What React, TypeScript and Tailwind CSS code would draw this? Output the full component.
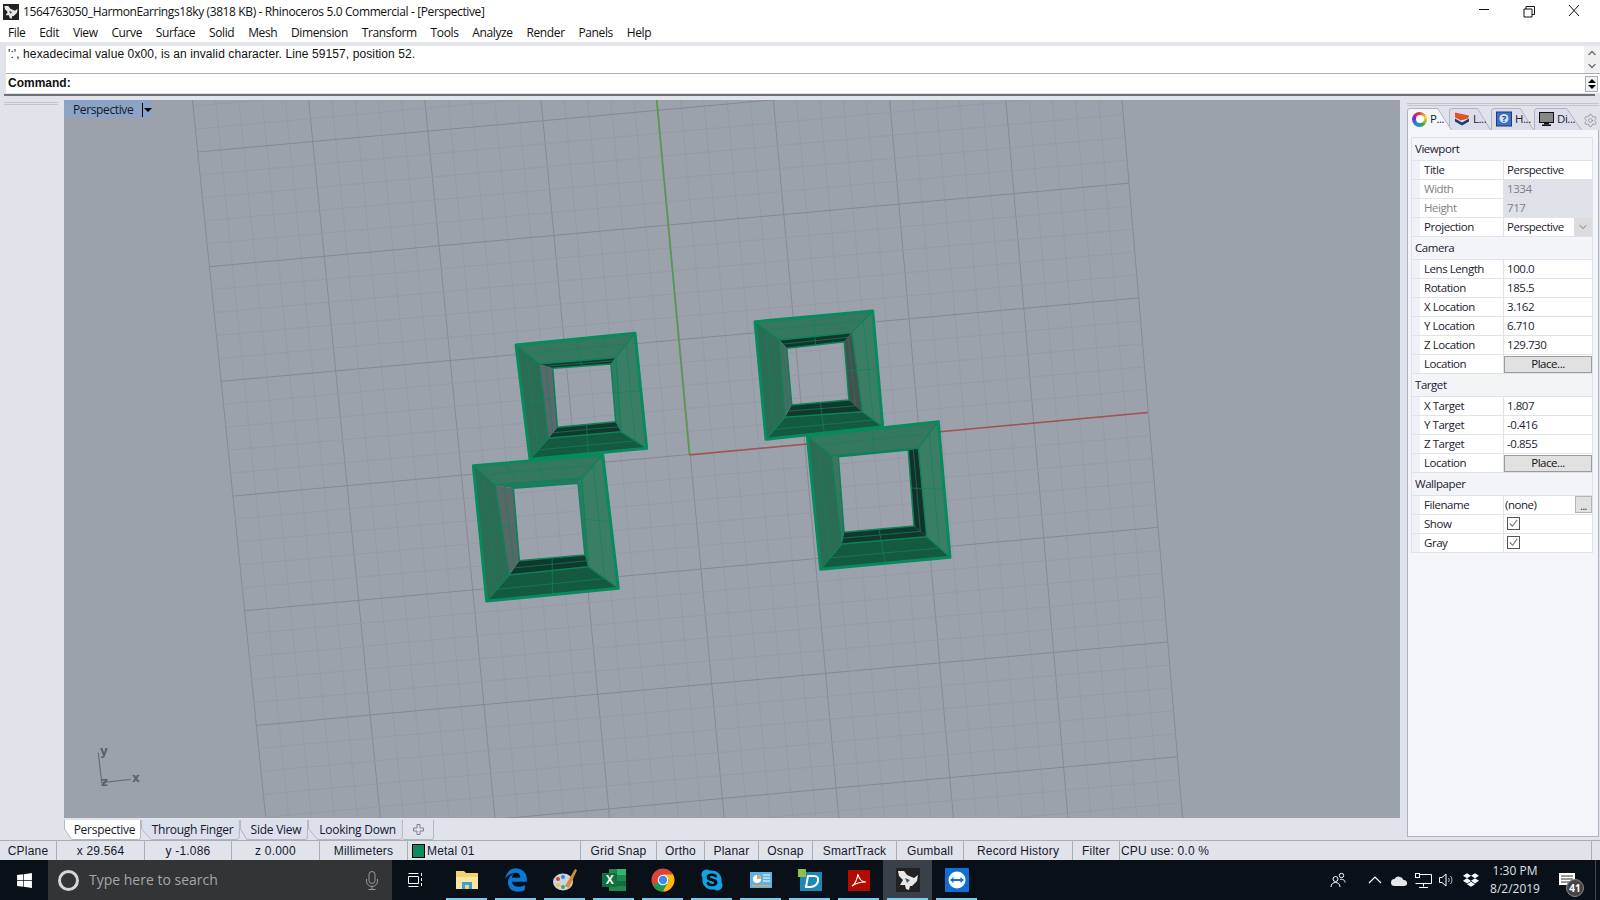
import { ChevronDown, ChevronUp, Settings } from "lucide-react";
import { FaDropbox, FaEdgeLegacy, FaSkype, FaWindows } from "react-icons/fa";

type P = [number, number];

const menu = ["File", "Edit", "View", "Curve", "Surface", "Solid", "Mesh", "Dimension", "Transform", "Tools", "Analyze", "Render", "Panels", "Help"];

// grid geometry, in page coordinates
const verticals = Array.from({ length: 41 }, (_, n) => {
  const i = n / 5;
  return { n, x1: 192.4 + 116.2 * i, x2: 266 + 114.6 * i };
});
const horizontals = Array.from({ length: 41 }, (_, n) => {
  const j = n / 5 - 1;
  return { n, x1: 197.8 + 11.6 * j, y1: 152 + 114.7 * j, x2: 1119 + 9.8 * j, y2: 68.5 + 114.7 * j };
});

const mix = (a: P, b: P, t: number): P => [a[0] + (b[0] - a[0]) * t, a[1] + (b[1] - a[1]) * t];
const pts = (list: P[]) => list.map((p) => p.join(",")).join(" ");

const earrings: { outer: P[]; ring: P[]; hole: P[]; walls: string[]; ribs?: boolean }[] = [
  {
    outer: [[516, 345], [635, 333.3], [646.7, 448.3], [530, 459.3]],
    ring: [[539.3, 364], [615.7, 357.7], [621, 431.7], [548.3, 438.3]],
    hole: [[552.7, 368.3], [611, 364], [615.7, 421.7], [557.3, 427.3]],
    walls: ["#14352c", "#3f7c68", "#10392d", "#59686a"],
    ribs: true,
  },
  {
    outer: [[755, 321.7], [872.7, 311], [882.7, 426.7], [766, 439.3]],
    ring: [[779.3, 340], [851.7, 332.7], [862.3, 411.7], [785, 417.3]],
    hole: [[786.7, 348.3], [844.3, 341.7], [849, 400], [791.7, 405]],
    walls: ["#10352b", "#454f4e", "#10392d", "#4d6a62"],
  },
  {
    outer: [[473.3, 465.7], [602.7, 455], [618.3, 588.3], [486.7, 601]],
    ring: [[495, 485], [581.7, 478.3], [588.3, 566.7], [509.3, 575]],
    hole: [[513.3, 488.3], [578.3, 483.3], [585, 555], [519.3, 560.7]],
    walls: ["#2c7560", "#3f7c68", "#10392d", "#566967"],
    ribs: true,
  },
  {
    outer: [[807.3, 436], [938.3, 421.7], [950, 557.3], [820.7, 569.3]],
    ring: [[831.7, 456], [918.3, 448.3], [926.7, 536.7], [841.7, 544]],
    hole: [[838.3, 456.7], [908.3, 450], [914, 526], [844, 532.3]],
    walls: ["#2c7560", "#14302a", "#10392d", "#4d7060"],
  },
];

const faceFill = ["#35785f", "#3b7e66", "#135a40", "#2b6c54"];

const Earring = ({ outer, ring, hole, walls, ribs }: (typeof earrings)[number]) => {
  const sides = [0, 1, 2, 3];
  const next = (i: number) => (i + 1) % 4;
  const band = outer.map((p, i) => mix(p, ring[i], 0.45));
  const wallMid = ring.map((p, i) => mix(p, hole[i], 0.5));
  return (
    <g strokeLinejoin="round">
      {sides.map((i) => (
        <polygon key={i} points={pts([outer[i], outer[next(i)], ring[next(i)], ring[i]])} fill={faceFill[i]} />
      ))}
      {sides.map((i) => (
        <polygon key={i} points={pts([ring[i], ring[next(i)], hole[next(i)], hole[i]])} fill={walls[i]} />
      ))}
      <polygon points={pts(band)} fill="none" stroke="#167f5b" strokeWidth="0.7" />
      <polygon points={pts(wallMid)} fill="none" stroke="#167f5b" strokeWidth="0.7" />
      {sides.map((i) => (
        <line
          key={i}
          x1={mix(outer[i], outer[next(i)], 0.5)[0]}
          y1={mix(outer[i], outer[next(i)], 0.5)[1]}
          x2={mix(hole[i], hole[next(i)], 0.5)[0]}
          y2={mix(hole[i], hole[next(i)], 0.5)[1]}
          stroke="#167f5b"
          strokeWidth="0.7"
        />
      ))}
      {ribs &&
        [0.25, 0.75].map((t) => (
          <line
            key={t}
            x1={mix(outer[0], outer[1], t)[0]}
            y1={mix(outer[0], outer[1], t)[1]}
            x2={mix(ring[0], ring[1], t)[0]}
            y2={mix(ring[0], ring[1], t)[1]}
            stroke="#167f5b"
            strokeWidth="0.7"
          />
        ))}
      {sides.map((i) => (
        <line key={i} x1={outer[i][0]} y1={outer[i][1]} x2={ring[i][0]} y2={ring[i][1]} stroke="#0a8358" strokeWidth="1.2" />
      ))}
      <polygon points={pts(ring)} fill="none" stroke="#0a8358" strokeWidth="1.4" />
      <polygon points={pts(hole)} fill="none" stroke="#0a8358" strokeWidth="1.6" />
      <polygon points={pts(outer)} fill="none" stroke="#078a5c" strokeWidth="3" />
    </g>
  );
};

const Scene = () => (
  <svg className="block h-full w-full" viewBox="64 100 1336 718">
    {verticals.map((l) => (
      <line key={l.n} x1={l.x1} y1="100" x2={l.x2} y2="820" stroke={l.n % 5 === 0 ? "#858a95" : "#959ba6"} strokeWidth="1" />
    ))}
    {horizontals.map((l) => (
      <line key={l.n} x1={l.x1} y1={l.y1} x2={l.x2} y2={l.y2} stroke={l.n % 5 === 0 ? "#858a95" : "#959ba6"} strokeWidth="1" />
    ))}
    <line x1="656.6" y1="100" x2="689.4" y2="455" stroke="#4f9c47" strokeWidth="1.5" />
    <line x1="689.4" y1="455" x2="1147.7" y2="412.6" stroke="#a8504f" strokeWidth="1.5" />
    {earrings.map((e, i) => (
      <Earring key={i} {...e} />
    ))}
    <polyline points="98.3,752.7 101.7,782.7 130.7,779.3" fill="none" stroke="#6a6e75" strokeWidth="1.2" />
    <g fill="#5b5f66" fontSize="12" fontWeight="700" fontFamily="DejaVu Sans, sans-serif">
      <text x="100" y="755">y</text>
      <text x="101" y="786">z</text>
      <text x="132" y="782">x</text>
    </g>
  </svg>
);

type Row =
  | { head: string }
  | { label: string; value?: string; off?: boolean; kind?: "select" | "button" | "file" | "check" };

const rows: Row[] = [
  { head: "Viewport" },
  { label: "Title", value: "Perspective" },
  { label: "Width", value: "1334", off: true },
  { label: "Height", value: "717", off: true },
  { label: "Projection", value: "Perspective", kind: "select" },
  { head: "Camera" },
  { label: "Lens Length", value: "100.0" },
  { label: "Rotation", value: "185.5" },
  { label: "X Location", value: "3.162" },
  { label: "Y Location", value: "6.710" },
  { label: "Z Location", value: "129.730" },
  { label: "Location", value: "Place...", kind: "button" },
  { head: "Target" },
  { label: "X Target", value: "1.807" },
  { label: "Y Target", value: "-0.416" },
  { label: "Z Target", value: "-0.855" },
  { label: "Location", value: "Place...", kind: "button" },
  { head: "Wallpaper" },
  { label: "Filename", value: "(none)", kind: "file" },
  { label: "Show", kind: "check" },
  { label: "Gray", kind: "check" },
];

const Check = () => (
  <div className="mb-[1px] ml-[3px] flex h-[13px] w-[13px] items-center justify-center border border-[#555]">
    <svg width="11" height="11" viewBox="0 0 12 12">
      <path d="M2 6l3 3 5-7" fill="none" stroke="#777" strokeWidth="1.2" />
    </svg>
  </div>
);

const PropRow = ({ row }: { row: Row }) => {
  if ("head" in row) {
    return <div className="flex h-[23px] items-center border-b border-[#e1e3ea] pl-[3px] text-[#1b2030]">{row.head}</div>;
  }
  return (
    <div className={`flex h-[19px] border-b border-[#e1e3ea] ${row.off ? "text-[#7d7f88]" : "text-[#1b2030]"}`}>
      <div className="w-[8px] bg-[#f0f1f6]" />
      <div className="flex w-[83px] items-center bg-white pl-[4px]">{row.label}</div>
      <div className={`relative flex flex-1 items-center border-l border-[#e1e3ea] ${row.off ? "bg-[#dfe1e9]" : "bg-white"}`}>
        {row.kind === "button" && (
          <div className="flex h-[17px] flex-1 items-center justify-center border border-[#9a9a9a] bg-[#e1e1e1] text-[#111]">{row.value}</div>
        )}
        {row.kind === "check" && <Check />}
        {row.kind === "select" && (
          <>
            <span className="pl-[3px]">{row.value}</span>
            <div className="absolute top-0 right-0 flex h-[18px] w-[18px] items-center justify-center bg-[#dcdcdc]">
              <ChevronDown size={12} strokeWidth={1.5} color="#555" />
            </div>
          </>
        )}
        {row.kind === "file" && (
          <>
            <span className="pl-[1px]">{row.value}</span>
            <div className="absolute top-0 right-0 flex h-[17px] w-[17px] items-end justify-center border border-[#b5b5b5] bg-[#e1e1e1] pb-[1px] text-[10px] leading-[10px]">...</div>
          </>
        )}
        {!row.kind && <span className="pl-[3px]">{row.value}</span>}
      </div>
    </div>
  );
};

const PanelTab = ({ w, active, label, children }: { w: number; active?: boolean; label: string; children: React.ReactNode }) => (
  <div className={`relative flex h-[22px] items-center pl-[5px] text-[#1b2030] ${active ? "z-10 -mr-[3px]" : ""}`} style={{ width: w }}>
    <svg className="absolute inset-0 h-full w-full" viewBox="0 0 44 22" preserveAspectRatio="none">
      <path
        d="M0.5 22V3Q0.5 0.5 3 0.5H30L43.5 22"
        fill={active ? "#f4f5f9" : "#dbdeea"}
        stroke="#aeb3c2"
        vectorEffect="non-scaling-stroke"
      />
    </svg>
    <div className="relative flex items-center gap-[3px]">
      {children}
      <span>{label}</span>
    </div>
  </div>
);

const ViewTab = ({ w, active, label }: { w: number; active?: boolean; label: string }) => (
  <div className="relative flex h-[20px] items-center justify-center" style={{ width: w }}>
    <svg className="absolute inset-0 h-full w-full" viewBox="0 0 80 20" preserveAspectRatio="none">
      <path
        d="M0.5 0V9L8 19.5H77Q79.5 19.5 79.5 17V0"
        fill={active ? "#ffffff" : "#dcdfec"}
        stroke="#b2b7c6"
        vectorEffect="non-scaling-stroke"
      />
    </svg>
    <span className="relative pl-[4px] tracking-[-0.25px] text-[#15192a]">{label}</span>
  </div>
);

const statusCells: { w: number; label: string }[] = [
  { w: 57, label: "CPlane" },
  { w: 88, label: "x 29.564" },
  { w: 87, label: "y -1.086" },
  { w: 88, label: "z 0.000" },
  { w: 88, label: "Millimeters" },
];

const snaps: { w: number; label: string }[] = [
  { w: 76, label: "Grid Snap" },
  { w: 48, label: "Ortho" },
  { w: 54, label: "Planar" },
  { w: 54, label: "Osnap" },
  { w: 84, label: "SmartTrack" },
  { w: 67, label: "Gumball" },
  { w: 109, label: "Record History" },
  { w: 47, label: "Filter" },
];

const TaskIcon = ({ active, children }: { active?: boolean; children: React.ReactNode }) => (
  <div className={`relative flex h-[40px] w-[49px] items-center justify-center ${active ? "bg-[#3a4048]" : ""}`}>
    {children}
    <div className="absolute right-[4px] bottom-0 left-[4px] h-[2px] bg-[#76cdf0]" />
  </div>
);

const RhinoGlyph = ({ size }: { size: number }) => (
  <svg width={size} height={size} viewBox="0 0 24 24">
    <rect width="24" height="24" fill="#222" />
    <path d="M2 3l6 0 3 4 7 3 4-3-1 6-5 5-2 0-1 4-3-1-1-4-5 0 3-5-4-4z" fill="#e8e8e8" />
    <path d="M9 10l5 2-3 3z" fill="#555" />
  </svg>
);

const TraySlot = ({ children }: { children: React.ReactNode }) => <div className="flex w-[24px] justify-center">{children}</div>;

export default function App() {
  return (
    <div className="flex h-[900px] w-[1600px] flex-col overflow-hidden bg-[#e1e3eb] font-['Open_Sans',sans-serif] text-[12px] leading-[16px] tracking-[-0.38px]">
      {/* title bar */}
      <div className="flex h-[24px] items-center bg-white pl-[3px] text-[#111]">
        <RhinoGlyph size={16} />
        <span className="ml-[4px] flex-1">1564763050_HarmonEarrings18ky (3818 KB) - Rhinoceros 5.0 Commercial - [Perspective]</span>
        <svg className="mr-[11px] mb-[2px]" width="110" height="14" viewBox="0 0 110 14" fill="none" stroke="#111" strokeWidth="1">
          <path d="M0 5.5H10" />
          <path d="M45 5H53V13H45zM47 5V2.5H55.5V10.5H53" />
          <path d="M90 1L100 12M100 1L90 12" />
        </svg>
      </div>
      <div className="flex h-[18px] items-center gap-[13.8px] bg-white pl-[8px] text-[#111]">
        {menu.map((m) => (
          <span key={m}>{m}</span>
        ))}
      </div>

      {/* command area */}
      <div className="flex h-[4px] bg-[#e3e4ea]" />
      <div className="pl-[6px]">
        <div className="flex h-[28px] border-b border-[#a9aeb7] bg-white font-['Liberation_Sans',sans-serif] tracking-[0.1px]">
          <div className="flex-1 pl-[2px] text-[#111]">':', hexadecimal value 0x00, is an invalid character. Line 59157, position 52.</div>
          <div className="flex w-[16px] flex-col items-center justify-center bg-[#f0f0f0] text-[#777]">
            <ChevronUp size={12} strokeWidth={3} />
            <ChevronDown size={12} strokeWidth={3} className="mt-[1px]" />
          </div>
        </div>
        <div className="flex h-[19px] items-center bg-white font-['Liberation_Sans',sans-serif] tracking-normal">
          <span className="mb-[2px] flex-1 pl-[2px] font-bold text-[#111]">Command:</span>
          <div className="mr-[2px] flex h-[16px] w-[13px] flex-col items-center justify-center gap-[2px] border border-[#a9aeb7] bg-[#f0f0f0]">
            <div className="h-0 w-0 border-x-[4px] border-b-[4px] border-x-transparent border-b-black" />
            <div className="h-0 w-0 border-x-[4px] border-t-[4px] border-x-transparent border-t-black" />
          </div>
        </div>
      </div>
      <div className="mt-[1px] mr-[5px] ml-[4px] h-[2px] bg-[#6e7177]" />

      {/* main area */}
      <div className="flex min-h-0 flex-1">
        <div className="w-[64px] pt-[6px] pr-[6px] pl-[4px]">
          <div className="h-[3px] border-y border-[#c3c6ce]" />
        </div>
        <div className="flex w-[1336px] flex-col pt-[4px]">
          <div className="relative h-[718px] bg-[#9ca2ac]">
            <Scene />
            <div className="absolute top-0 left-0 flex h-[18px] w-[88px] items-center bg-[#8ba3c5] pt-[1px] pl-[9px] text-[#15192a]">
              <span className="w-[69px]">Perspective</span>
              <div className="h-[14px] w-px bg-black" />
              <div className="ml-[1px] h-0 w-0 border-x-[4px] border-t-[4px] border-x-transparent border-t-black" />
            </div>
          </div>
          <div className="mt-[2px] flex items-start">
            <ViewTab w={77} active label="Perspective" />
            <ViewTab w={99} label="Through Finger" />
            <ViewTab w={68} label="Side View" />
            <ViewTab w={95} label="Looking Down" />
            <div className="flex h-[20px] w-[31px] items-center justify-center rounded-br-[3px] border-r border-b border-[#b2b7c6]">
              <svg width="11" height="11" viewBox="0 0 11 11">
                <path d="M4 .5h3v3.5h3.5v3H7v3.5H4V7H.5V4H4z" fill="none" stroke="#7c8088" />
              </svg>
            </div>
          </div>
        </div>
        <div className="ml-[7px] flex w-[192px] flex-col pt-[7px] text-[11.5px] tracking-[-0.45px]">
          <div className="mb-[2px] h-[3px] border-y border-[#c3c6ce]" />
          <div className="flex h-[22px] items-end">
            <PanelTab w={45} active label="P...">
              <div className="flex h-[15px] w-[15px] items-center justify-center rounded-full bg-[conic-gradient(#e53935,#fdd835,#43a047,#1e88e5,#8e24aa,#e53935)]">
                <div className="h-[8px] w-[8px] rounded-full bg-white" />
              </div>
            </PanelTab>
            <PanelTab w={42} label="L...">
              <svg width="16" height="16" viewBox="0 0 16 15">
                <path d="M1 2l14 3v5l-7 4-7-4z" fill="#1f3a78" />
                <path d="M1 2l14 3v2L8 11 1 7z" fill="#e8e8e8" />
                <path d="M1 1l14 3-1 3-7 2-6-3z" fill="#e2522b" />
              </svg>
            </PanelTab>
            <PanelTab w={43} label="H...">
              <svg width="16" height="16" viewBox="0 0 16 15">
                <rect x="0.5" y="0.5" width="15" height="14" fill="#3d6fc4" stroke="#1f3a78" />
                <circle cx="8" cy="7" r="4.5" fill="#cfe0f8" />
                <text x="8" y="10" textAnchor="middle" fontSize="9" fontWeight="700" fill="#1f3a78">?</text>
              </svg>
            </PanelTab>
            <PanelTab w={48} label="Di...">
              <svg width="15" height="14" viewBox="0 0 15 14">
                <rect x="0.5" y="0.5" width="14" height="10" fill="#888" stroke="#111" />
                <rect x="5" y="11" width="5" height="1.5" fill="#111" />
                <rect x="3" y="12.5" width="9" height="1.5" fill="#111" />
              </svg>
            </PanelTab>
            <Settings size={15} strokeWidth={1} color="#777" className="mb-[2px] ml-[1px]" />
          </div>
          <div className="h-[707px] border border-t-0 border-[#aeb3c2] bg-[#f4f5f9] pt-[7px] pr-[5px] pl-[3px]">
            <div className="border border-b-0 border-[#dfe1e9] bg-[#f3f4f8]">
              {rows.map((row, i) => (
                <PropRow key={i} row={row} />
              ))}
            </div>
          </div>
        </div>
      </div>

      {/* status bar */}
      <div className="flex h-[20px] items-center border-t border-[#a9aeb7] bg-[#e1e3eb] font-['Liberation_Sans',sans-serif] tracking-[0.2px] text-[#15192a]">
        {statusCells.map((c) => (
          <div key={c.label} className="flex h-full items-center justify-center border-r border-[#a9aeb7]" style={{ width: c.w }}>
            {c.label}
          </div>
        ))}
        <div className="flex h-full w-[173px] items-center border-r border-[#a9aeb7] pl-[4px]">
          <div className="mr-[2px] h-[14px] w-[13px] border border-black bg-[#0a8a5e]" />
          Metal 01
        </div>
        {snaps.map((c) => (
          <div key={c.label} className="flex h-full items-center justify-center border-r border-[#a9aeb7]" style={{ width: c.w }}>
            {c.label}
          </div>
        ))}
        <div className="flex h-full w-[472px] items-center border-r border-[#a9aeb7] pl-[1px]">CPU use: 0.0 %</div>
      </div>

      {/* taskbar */}
      <div className="flex h-[40px] items-center bg-[#0a1018] text-white">
        <div className="flex h-full w-[48px] items-center justify-center">
          <FaWindows size={17} />
        </div>
        <div className="flex h-full w-[344px] items-center bg-[#333435] pl-[10px] font-['Open_Sans',sans-serif] text-[14px] tracking-normal text-[#a3a7ab]">
          <div className="h-[21px] w-[21px] rounded-full border-[3px] border-[#d6d6d6]" />
          <span className="ml-[10px] flex-1">Type here to search</span>
          <svg className="mr-[13px]" width="14" height="19" viewBox="0 0 14 19" fill="none" stroke="#9a9a9a" strokeWidth="1">
            <rect x="4" y="0.5" width="6" height="12" rx="3" />
            <path d="M1.5 8v2a5.5 5.5 0 0011 0V8M7 15.5V18.5M3.5 18.5h7" />
          </svg>
        </div>
        <div className="mr-[4px] flex w-[46px] justify-center">
          <svg width="15" height="16" viewBox="0 0 15 16" fill="none" stroke="#fff" strokeWidth="1">
            <path d="M0.5 4.5H10.5V11.5H0.5zM0.5 1.5H10.5M0.5 14.5H10.5M13.5 1V4M13.5 6V9M13.5 11V14" />
          </svg>
        </div>
        <TaskIcon>
          <svg width="24" height="20" viewBox="0 0 24 20">
            <path d="M1 1h8l2 2h12v16H1z" fill="#f5d36b" />
            <rect x="1" y="7" width="22" height="12" fill="#fbe6a0" />
            <rect x="7" y="12" width="10" height="7" fill="#3aa0dc" />
            <rect x="10" y="15" width="4" height="4" fill="#f5d36b" />
          </svg>
        </TaskIcon>
        <TaskIcon>
          <FaEdgeLegacy size={24} color="#0a78d7" />
        </TaskIcon>
        <TaskIcon>
          <svg width="26" height="26" viewBox="0 0 26 26">
            <ellipse cx="11" cy="15" rx="10" ry="8.5" fill="#c7d5e2" />
            <circle cx="6" cy="12" r="2" fill="#d9402e" />
            <circle cx="11" cy="10" r="2" fill="#2f86d6" />
            <circle cx="6" cy="18" r="2" fill="#f0c040" />
            <circle cx="11" cy="20" r="2" fill="#4aa84a" />
            <path d="M13 19L23 2l2 1-8 18z" fill="#d98a32" />
          </svg>
        </TaskIcon>
        <TaskIcon>
          <svg width="24" height="24" viewBox="0 0 24 24">
            <rect x="7" y="1" width="17" height="22" fill="#1f8a50" />
            <rect x="15" y="1" width="9" height="6" fill="#35b56e" />
            <rect x="15" y="13" width="9" height="5" fill="#146b3c" />
            <rect x="0" y="5" width="15" height="14" fill="#107040" />
            <text x="7.5" y="16" textAnchor="middle" fontSize="12" fontWeight="700" fill="#fff" fontFamily="Liberation Sans, sans-serif">X</text>
          </svg>
        </TaskIcon>
        <TaskIcon>
          <svg width="24" height="24" viewBox="0 0 24 24">
            <circle cx="12" cy="12" r="11.5" fill="#db4437" />
            <path d="M12 12L2 17.8A11.5 11.5 0 0 0 12 23.5L18 12z" fill="#0f9d58" />
            <path d="M12 6.5H22A11.5 11.5 0 0 1 12 23.5L18 12z" fill="#fbbc05" />
            <circle cx="12" cy="12" r="5.3" fill="#fff" />
            <circle cx="12" cy="12" r="4.2" fill="#4285f4" />
          </svg>
        </TaskIcon>
        <TaskIcon>
          <FaSkype size={24} color="#12a5e6" />
        </TaskIcon>
        <TaskIcon>
          <svg width="22" height="16" viewBox="0 0 22 16">
            <rect width="22" height="16" fill="#5ab3e4" />
            <circle cx="7" cy="7" r="4" fill="#fff" />
            <path d="M7 7V3A4 4 0 0 1 11 7z" fill="#f2a33c" />
            <path d="M13 3h7M13 6h7M13 9h7" stroke="#fff" />
            <rect x="2" y="13" width="18" height="1.5" fill="#f2a33c" />
          </svg>
        </TaskIcon>
        <TaskIcon>
          <svg width="24" height="22" viewBox="0 0 24 22">
            <rect x="2" y="3" width="22" height="19" fill="#1d87b8" />
            <rect x="0" y="0" width="8" height="8" fill="#8bc34a" />
            <path d="M10 7h6q5 0 4 5t-7 6H8z" fill="none" stroke="#fff" strokeWidth="2" />
          </svg>
        </TaskIcon>
        <TaskIcon>
          <svg width="22" height="21" viewBox="0 0 22 21">
            <rect width="22" height="21" fill="#b30b00" />
            <path d="M4 16c3-2 5-6 6-12 1 5 3 8 8 8-5 0-10 1-14 4z" fill="none" stroke="#fff" strokeWidth="1.2" />
          </svg>
        </TaskIcon>
        <TaskIcon active>
          <RhinoGlyph size={24} />
        </TaskIcon>
        <TaskIcon>
          <svg width="24" height="24" viewBox="0 0 24 24">
            <rect width="24" height="24" rx="1" fill="#0e6fd6" />
            <circle cx="12" cy="12" r="8.5" fill="#fff" />
            <path d="M5 12l3.5-3v2h7V9l3.5 3-3.5 3v-2h-7v2z" fill="#0e6fd6" />
          </svg>
        </TaskIcon>
        <div className="flex-1" />
        {/* tray */}
        <svg className="mr-[17px]" width="16" height="16" viewBox="0 0 16 16" fill="none" stroke="#fff">
          <circle cx="5.5" cy="7" r="2.5" />
          <path d="M1 15c0-3 2-4.5 4.5-4.5S10 12 10 15" />
          <circle cx="11.5" cy="3.5" r="2.2" />
          <path d="M10 7.5c2-.5 5 0 5 3" />
        </svg>
        <TraySlot>
          <svg width="14" height="8" viewBox="0 0 14 8" fill="none" stroke="#fff" strokeWidth="1.2">
            <path d="M1 7l6-6 6 6" />
          </svg>
        </TraySlot>
        <TraySlot>
          <svg width="17" height="11" viewBox="0 0 17 11">
            <path d="M3.5 11a3.5 3.5 0 0 1 0-7 5 5 0 0 1 9 1 3 3 0 0 1 1 6z" fill="#e6e6e6" />
          </svg>
        </TraySlot>
        <TraySlot>
          <svg width="17" height="15" viewBox="0 0 17 15" fill="none" stroke="#fff">
            <path d="M4.5 1.5H16.5V10.5H0.5M8.5 10.5V13.5M4 14.5H13" />
            <rect x="0.5" y="0.5" width="4" height="4" />
          </svg>
        </TraySlot>
        <TraySlot>
          <svg width="16" height="14" viewBox="0 0 16 14" fill="none" stroke="#fff">
            <path d="M0.5 4.5H3L7 1V13L3 9.5H0.5z" />
            <path d="M9.5 5a3 3 0 0 1 0 4M11.5 3a6 6 0 0 1 0 8" strokeOpacity="0.7" />
          </svg>
        </TraySlot>
        <TraySlot>
          <FaDropbox size={16} color="#fff" />
        </TraySlot>
        <div className="mr-[8px] flex w-[64px] flex-col items-center text-[12px] leading-[18px] tracking-normal text-[#dfe1e4]">
          <span>1:30 PM</span>
          <span>8/2/2019</span>
        </div>
        <div className="relative w-[40px] self-stretch">
          <svg className="absolute top-[13px] left-[4px]" width="16" height="13" viewBox="0 0 16 13">
            <path d="M0 0h16v12H0z" fill="#fff" />
            <path d="M2 3h12M2 6h12M2 9h8" stroke="#333" />
          </svg>
          <div className="absolute top-[19px] left-[11px] flex h-[18px] w-[18px] items-center justify-center rounded-full border border-[#888] bg-[#444] text-[10px] leading-none font-bold tracking-normal">41</div>
        </div>
        <div className="h-full w-[5px] border-l border-[#444]" />
      </div>
    </div>
  );
}
